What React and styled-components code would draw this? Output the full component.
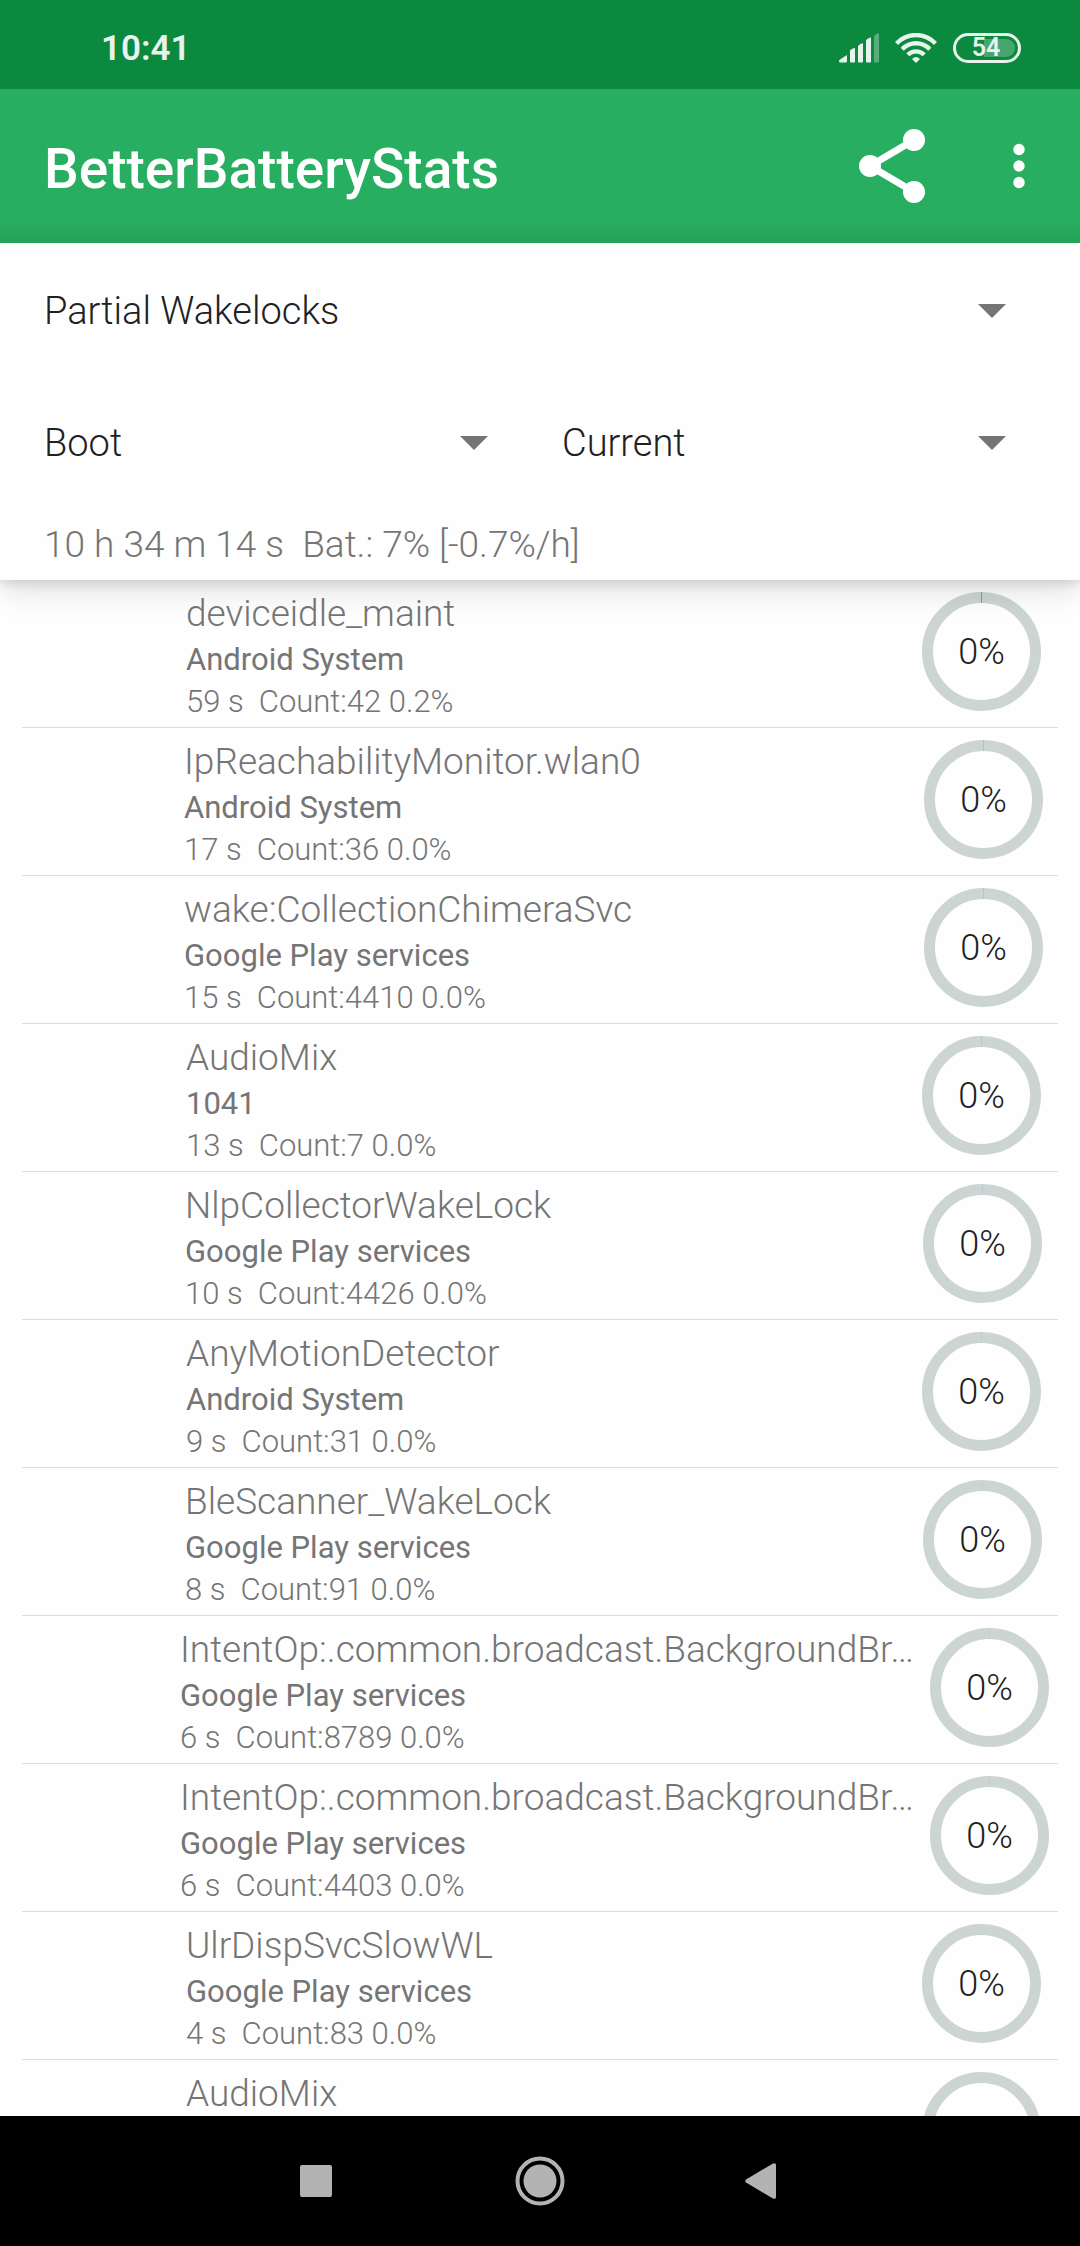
import React from "react";
import styled, { createGlobalStyle } from "styled-components";

const GlobalStyle = createGlobalStyle`
  *, *::before, *::after { box-sizing: border-box; }
  html, body { margin: 0; padding: 0; background: #fefefe; }
  body, button, select { font-family: Roboto, "Noto Sans", sans-serif; }
`;

const Screen = styled.div`
  display: flex;
  flex-direction: column;
  height: 100vh;
  overflow: hidden;
  background: #fefefe;
`;

const StatusBar = styled.div`
  display: flex;
  align-items: center;
  justify-content: space-between;
  flex: none;
  height: 89px;
  padding: 6px 59px 0 101px;
  background: #0a893f;
  color: #e7f3ec;
`;

const Clock = styled.time`
  padding-top: 2px;
  font-size: 35px;
  line-height: 42px;
  font-weight: 600;
`;

const StatusIcons = styled.div`
  display: flex;
  align-items: center;
  gap: 16px;
`;

const BatteryPill = styled.div`
  width: 68px;
  height: 30px;
  padding: 3px;
  border: 3px solid #e7f3ec;
  border-radius: 15px;
`;

const BatteryLevel = styled.div`
  height: 18px;
  padding-right: 2px;
  border-radius: 9px;
  background: linear-gradient(90deg, transparent 45%, #48a570 45%);
  font-size: 25px;
  line-height: 18px;
  font-weight: 600;
  text-align: center;
`;

const AppBar = styled.header`
  display: flex;
  align-items: center;
  flex: none;
  height: 154px;
  padding: 0 16px 0 44px;
  background: linear-gradient(#28ae61 0, #28ae61 132px, #25a059 154px);
  color: #ffffff;
`;

const Title = styled.h1`
  flex: 1;
  margin: 0;
  padding-top: 6px;
  font-size: 55px;
  line-height: 64px;
  font-weight: 500;
`;

const IconButton = styled.button`
  display: flex;
  align-items: center;
  justify-content: center;
  width: ${(p) => p.$width}px;
  height: 132px;
  padding: 0;
  border: 0;
  background: none;
  color: inherit;
`;

const Filters = styled.section`
  position: relative;
  flex: none;
  padding: 2px 0 10px 44px;
  background: #fefefe;
  box-shadow: 0 8px 32px rgba(0, 0, 0, 0.14), 0 3px 10px rgba(0, 0, 0, 0.12);
  clip-path: inset(0 0 -60px 0);
`;

const FilterRow = styled.div`
  display: grid;
  grid-auto-flow: column;
  grid-auto-columns: 1fr;
`;

const Picker = styled.label`
  display: grid;
  align-items: center;
  height: 132px;
  padding-right: 74px;

  > * {
    grid-area: 1 / 1;
  }

  > svg {
    justify-self: end;
    pointer-events: none;
  }
`;

const PickerSelect = styled.select`
  appearance: none;
  width: 100%;
  height: 96px;
  margin: 0;
  padding: 0;
  border: 0;
  background: none;
  color: #212121;
  font-size: 38px;
  font-weight: 300;
`;

const Summary = styled.p`
  margin: 11px 0 0;
  color: #757575;
  font-size: 37px;
  line-height: 50px;
  font-weight: 300;
  white-space: pre;
`;

const List = styled.ul`
  flex: 1;
  min-height: 0;
  margin: 0;
  padding: 0 22px;
  overflow: hidden;
  list-style: none;
`;

const shifts = {
  short: ["164px", "17px"],
  medium: ["163px", "16px"],
  long: ["162px", "15px"],
  full: ["158px", "9px"],
};

const Row = styled.li`
  display: grid;
  grid-template-columns: ${(p) => shifts[p.$fit][0]} minmax(0, 1fr) 119px;
  align-items: start;
  height: 148px;
  padding: 8px ${(p) => shifts[p.$fit][1]} 4px 0;
  border-bottom: 1px solid #dddddd;
`;

const Details = styled.div`
  grid-column: 2;
  color: #757575;
`;

const Name = styled.div`
  font-size: 37px;
  line-height: 51px;
  font-weight: 300;
  white-space: nowrap;
`;

const Owner = styled.div`
  font-size: 31px;
  line-height: 42px;
  font-weight: 400;
`;

const Usage = styled.div`
  font-size: 31px;
  line-height: 42px;
  font-weight: 300;
  white-space: pre;
`;

const Gauge = styled.div`
  display: grid;
  place-items: center;
  margin-top: 4px;

  > * {
    grid-area: 1 / 1;
  }
`;

const GaugeValue = styled.span`
  color: #212121;
  font-size: 36px;
  line-height: 42px;
  font-weight: 300;
`;

const NavBar = styled.nav`
  display: flex;
  align-items: center;
  justify-content: center;
  gap: 92px;
  flex: none;
  height: 130px;
  background: #000000;
  color: #b3b3b3;
`;

function Arrow() {
  return (
    <svg width="28" height="14" viewBox="0 0 28 14" aria-hidden="true">
      <path d="M0 0h28L14 14z" fill="#757575" />
    </svg>
  );
}

function Signal() {
  return (
    <svg width="40" height="30" viewBox="0 0 40 30" fill="currentColor" aria-hidden="true">
      <path d="M0 28.200Q0 27 1 26.500L8 22v6.500q0 1-1 1H1Q0 29.500 0 28.200z" />
      <path d="M11 18q0-1 1-1.500l3-1.500q1-.3 1 1V28.500q0 1-1 1h-3q-1 0-1-1z" />
      <path d="M19 13.500q0-1 1-1.500l3-1.800q1-.3 1 1V28.500q0 1-1 1h-3q-1 0-1-1z" />
      <path d="M27 8q0-1 1-1.700l3-1.800q1-.3 1 1V28.500q0 1-1 1h-3q-1 0-1-1z" />
      <path d="M35 4q0-1.500 1.200-2.200L39 .2Q40 0 40 1V28.500q0 1-1 1h-3q-1 0-1-1z" opacity="0.35" />
    </svg>
  );
}

function Wifi() {
  return (
    <svg width="42" height="30" viewBox="0 0 42 30" fill="none" stroke="currentColor" strokeWidth="4.4" aria-hidden="true">
      <path d="M1.500 10.500C12.500-.8 29.500-.8 40.500 10.500" />
      <path d="M7.200 16.200C15 8.300 27 8.300 34.800 16.200" />
      <path d="M12.800 21.800C17.500 17.200 24.500 17.200 29.200 21.800" />
      <path d="M21 30l-4-4q4-4 8 0z" fill="currentColor" stroke="none" />
    </svg>
  );
}

function Ring({ tick }) {
  return (
    <svg width="119" height="119" viewBox="0 0 119 119" fill="none" aria-hidden="true">
      <circle cx="59.5" cy="59.5" r="54" stroke="#cdd5d4" strokeWidth="11" />
      <path d="M59.500 0v11" stroke="#5b9bc8" strokeWidth="1" opacity={tick} />
    </svg>
  );
}

const wakelocks = [
  { name: "deviceidle_maint", owner: "Android System", usage: "59 s  Count:42 0.2%", fit: "short", tick: 0.9 },
  { name: "IpReachabilityMonitor.wlan0", owner: "Android System", usage: "17 s  Count:36 0.0%", fit: "long", tick: 0.3 },
  { name: "wake:CollectionChimeraSvc", owner: "Google Play services", usage: "15 s  Count:4410 0.0%", fit: "long", tick: 0.25 },
  { name: "AudioMix", owner: "1041", usage: "13 s  Count:7 0.0%", fit: "short", tick: 0.2 },
  { name: "NlpCollectorWakeLock", owner: "Google Play services", usage: "10 s  Count:4426 0.0%", fit: "medium", tick: 0.15 },
  { name: "AnyMotionDetector", owner: "Android System", usage: "9 s  Count:31 0.0%", fit: "short", tick: 0.15 },
  { name: "BleScanner_WakeLock", owner: "Google Play services", usage: "8 s  Count:91 0.0%", fit: "medium", tick: 0.1 },
  { name: "IntentOp:.common.broadcast.BackgroundBr…", owner: "Google Play services", usage: "6 s  Count:8789 0.0%", fit: "full", tick: 0.1 },
  { name: "IntentOp:.common.broadcast.BackgroundBr…", owner: "Google Play services", usage: "6 s  Count:4403 0.0%", fit: "full", tick: 0.1 },
  { name: "UlrDispSvcSlowWL", owner: "Google Play services", usage: "4 s  Count:83 0.0%", fit: "short", tick: 0.05 },
  { name: "AudioMix", owner: null, usage: null, fit: "short", tick: 0.05 },
];

function Filter({ label, value }) {
  return (
    <Picker>
      <PickerSelect aria-label={label} defaultValue={value}>
        <option>{value}</option>
      </PickerSelect>
      <Arrow />
    </Picker>
  );
}

export default function App() {
  return (
    <Screen>
      <GlobalStyle />
      <StatusBar>
        <Clock>10:41</Clock>
        <StatusIcons>
          <Signal />
          <Wifi />
          <BatteryPill>
            <BatteryLevel>54</BatteryLevel>
          </BatteryPill>
        </StatusIcons>
      </StatusBar>

      <AppBar>
        <Title>BetterBatteryStats</Title>
        <IconButton $width={164} aria-label="Share">
          <svg width="66" height="74" viewBox="0 0 66 74" fill="currentColor" aria-hidden="true">
            <path d="M55 11L11 37l44 26" fill="none" stroke="currentColor" strokeWidth="7" />
            <circle cx="55" cy="11" r="11" />
            <circle cx="11" cy="37" r="11" />
            <circle cx="55" cy="63" r="11" />
          </svg>
        </IconButton>
        <IconButton $width={90} aria-label="More options">
          <svg width="12" height="46" viewBox="0 0 12 46" fill="currentColor" aria-hidden="true">
            <circle cx="6" cy="6.500" r="5.700" />
            <circle cx="6" cy="23" r="5.700" />
            <circle cx="6" cy="39.500" r="5.700" />
          </svg>
        </IconButton>
      </AppBar>

      <Filters>
        <FilterRow>
          <Filter label="Statistic" value="Partial Wakelocks" />
        </FilterRow>
        <FilterRow>
          <Filter label="From" value="Boot" />
          <Filter label="To" value="Current" />
        </FilterRow>
        <Summary>{"10 h 34 m 14 s  Bat.: 7% [-0.7%/h]"}</Summary>
      </Filters>

      <List>
        {wakelocks.map((w, i) => (
          <Row key={i} $fit={w.fit}>
            <Details>
              <Name>{w.name}</Name>
              {w.owner && <Owner>{w.owner}</Owner>}
              {w.usage && <Usage>{w.usage}</Usage>}
            </Details>
            <Gauge>
              <Ring tick={w.tick} />
              {w.usage && <GaugeValue>0%</GaugeValue>}
            </Gauge>
          </Row>
        ))}
      </List>

      <NavBar>
        <IconButton $width={132} aria-label="Recent apps">
          <svg width="32" height="32" viewBox="0 0 32 32" aria-hidden="true">
            <rect width="32" height="32" rx="2" fill="currentColor" />
          </svg>
        </IconButton>
        <IconButton $width={132} aria-label="Home">
          <svg width="50" height="50" viewBox="0 0 50 50" aria-hidden="true">
            <circle cx="25" cy="25" r="22.500" fill="none" stroke="currentColor" strokeWidth="4" />
            <circle cx="25" cy="25" r="16.500" fill="currentColor" />
          </svg>
        </IconButton>
        <IconButton $width={132} aria-label="Back">
          <svg width="38" height="36" viewBox="0 0 38 36" fill="currentColor" aria-hidden="true">
            <path d="M1 16.500L28 .4Q31-.5 31 2v32q0 2.500-3 1.600L1 19.500Q-.5 18 1 16.500z" />
          </svg>
        </IconButton>
      </NavBar>
    </Screen>
  );
}
